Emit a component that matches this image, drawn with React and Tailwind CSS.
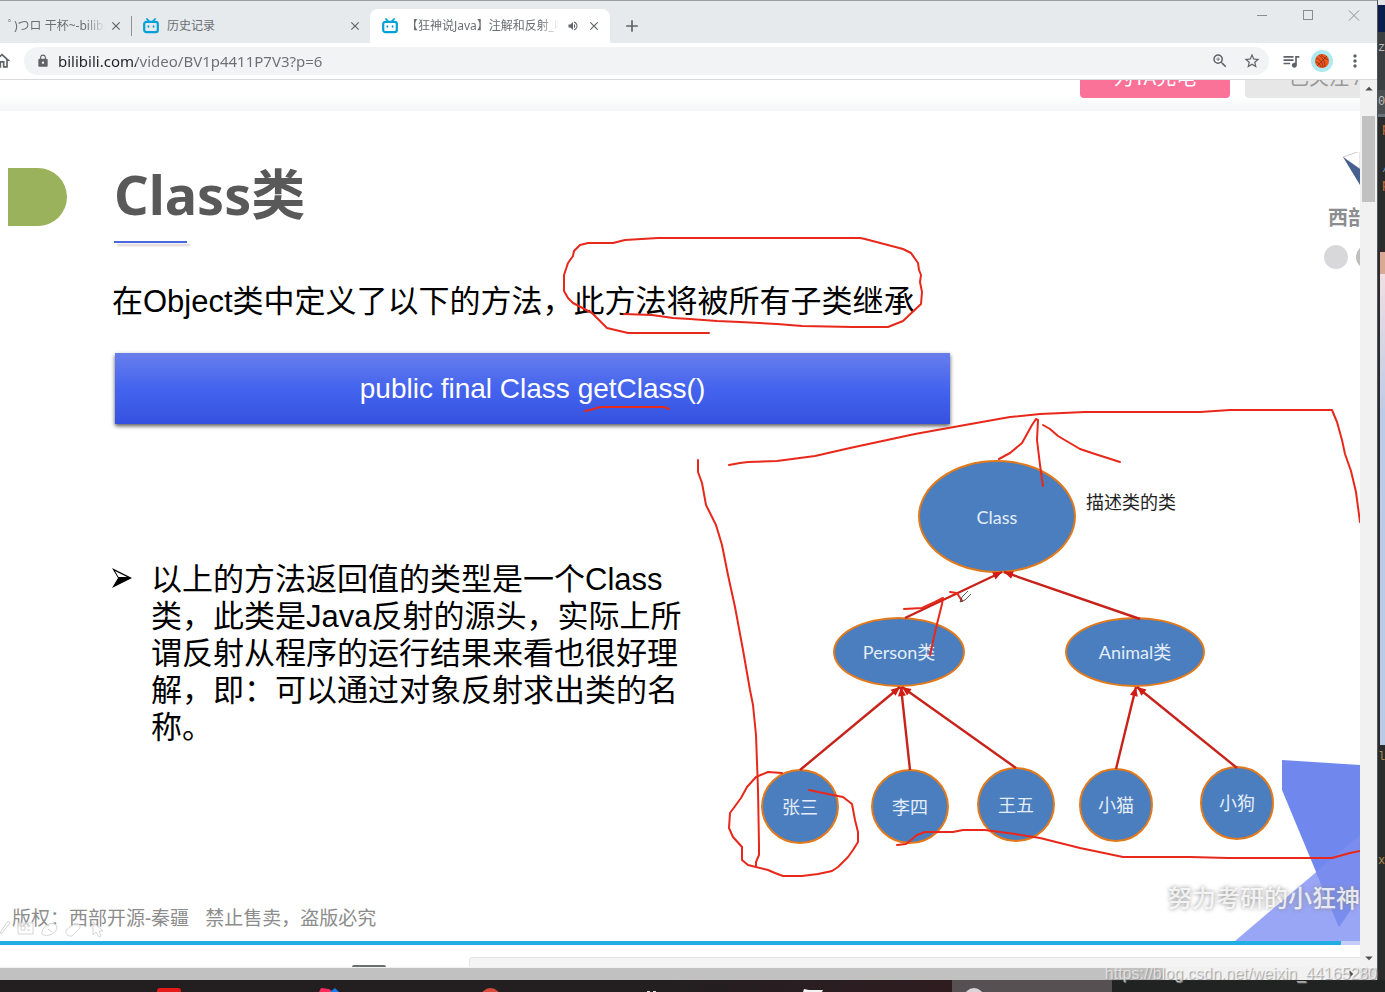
import {
  MdAdd,
  MdArrowDropDown,
  MdArrowDropUp,
  MdArrowRight,
  MdClose,
  MdLock,
  MdMoreVert,
  MdOutlineHome,
  MdQueueMusic,
  MdStarBorder,
  MdVolumeUp,
  MdZoomIn,
} from "react-icons/md";

const nodes = [
  { label: "Class", box: "left-[918px] top-[349px] w-[158px] h-[113px]" },
  { label: "Person类", box: "left-[833px] top-[506px] w-[132px] h-[70px]" },
  { label: "Animal类", box: "left-[1065px] top-[506px] w-[140px] h-[70px]" },
  { label: "张三", box: "left-[761px] top-[658px] w-[78px] h-[75px]" },
  { label: "李四", box: "left-[871px] top-[658px] w-[78px] h-[75px]" },
  { label: "王五", box: "left-[977px] top-[656px] w-[78px] h-[75px]" },
  { label: "小猫", box: "left-[1079px] top-[657px] w-[74px] h-[74px]" },
  { label: "小狗", box: "left-[1200px] top-[655px] w-[74px] h-[74px]" },
];

// child top -> parent bottom
const edges = [
  [905, 618, 1002, 572],
  [1140, 619, 1004, 572],
  [800, 770, 900, 687],
  [910, 770, 901, 687],
  [1016, 768, 902, 687],
  [1116, 769, 1136, 687],
  [1237, 768, 1137, 687],
];

const penStrokes = [
  // loop round the second half of the sentence
  "624,314 652,315 673,318 690,319 717,321 740,322 777,324 802,326 853,327 888,327 893,325 903,321 921,304 922,292 920,282 921,275 919,270 918,263 911,253 903,249 865,239 860,238 658,238 625,240 613,243 588,243 580,245 574,251 573,256 568,263 564,275 564,291 568,298 573,303 592,313 607,328 628,333 709,333",
  "585,411 590,410 600,407 664,407 669,409",
  // big frame
  "729,465 740,463 748,462 777,461 815,456 850,448 915,434 965,425 1010,417 1040,414 1085,412 1200,412 1230,410 1332,410 1337,422 1342,440 1345,454 1351,471 1356,492 1360,522",
  "698,460 698,472 702,483 706,505 716,525 722,545 728,575 735,607 743,650 750,690 753,705 756,735 758,790 759,845 759,855 756,862 756,866",
  "897,845 906,844 917,835 925,832 953,832 963,830 985,830 1015,834 1040,838 1080,848 1123,857 1190,857 1228,858 1332,858 1350,853 1360,851",
  "782,773 768,772 756,777 747,787 741,798 730,813 729,828 733,837 742,847 742,860 748,865 768,870 775,873 783,876 802,876 818,874 832,871 838,867 848,857 853,850 858,842 858,832 855,820 852,804 843,797 823,793 809,790",
  // arrows
  "999,459 1010,453 1022,443 1032,425 1036,419 1038,420 1037,440 1040,465 1043,486",
  "1043,425 1050,429 1058,436 1080,449 1095,454 1120,462",
  "904,609 922,608 935,602 943,598 942,604 936,628 930,655",
  "950,592 957,593 962,601",
];

function BiliIcon() {
  return (
    <svg viewBox="0 0 16 16" className="w-4 h-4 shrink-0" fill="none" stroke="#00a1d6" strokeLinecap="round">
      <rect x="1.2" y="3.8" width="13.6" height="10.4" rx="2.2" strokeWidth="2.2" />
      <path d="M4 1 L5.8 3 M12 1 L10.2 3" strokeWidth="1.8" />
      <path d="M5.4 8.2 V8.8 M10.6 8.2 V8.8" strokeWidth="1.8" />
    </svg>
  );
}

function CloseButton() {
  return (
    <button aria-label="关闭标签页" className="shrink-0 text-[#5f6368]">
      <MdClose className="w-3.5 h-3.5" />
    </button>
  );
}

function TabStrip() {
  return (
    <div className="flex items-end h-[42px] bg-[#e6eaed] text-xs text-[#6b6f73]">
      <div className="flex items-center h-[34px] w-[131px] pl-2 pr-2 gap-1">
        <span className="flex-1 min-w-0 overflow-hidden whitespace-nowrap [mask-image:linear-gradient(to_right,black_80%,transparent)]">
          ﾟ)つロ 干杯~-bilibili
        </span>
        <CloseButton />
      </div>
      <div className="w-px h-5 mb-[7px] bg-[#8e9296]"></div>
      <div className="flex items-center h-[34px] w-[238px] pl-[11px] pr-2 gap-2">
        <BiliIcon />
        <span className="flex-1 whitespace-nowrap">历史记录</span>
        <CloseButton />
      </div>
      <div className="flex items-center h-[34px] w-[240px] pl-3 pr-[9px] gap-2 bg-white rounded-t-lg">
        <BiliIcon />
        <span className="flex-1 min-w-0 overflow-hidden whitespace-nowrap [mask-image:linear-gradient(to_right,black_88%,transparent)]">
          【狂神说Java】注解和反射_哔哩
        </span>
        <MdVolumeUp className="w-3 h-3 shrink-0 text-[#5f6368]" />
        <CloseButton />
      </div>
      <button aria-label="新标签页" className="flex items-center h-[34px] ml-3 text-[#5f6368]">
        <MdAdd className="w-5 h-5" />
      </button>
      <div className="flex self-start ml-auto mt-[9px] mr-[17px] gap-[34px] text-[#8a8d90]">
        <button aria-label="最小化">
          <svg className="w-3 h-3" viewBox="0 0 12 12" stroke="currentColor"><path d="M1 5.5H11" /></svg>
        </button>
        <button aria-label="最大化">
          <svg className="w-3 h-3" viewBox="0 0 12 12" fill="none" stroke="currentColor"><rect x="1.5" y=".5" width="9" height="9" /></svg>
        </button>
        <button aria-label="关闭">
          <svg className="w-3 h-3" viewBox="0 0 12 12" stroke="currentColor"><path d="M1 .5L11 10.5M11 .5L1 10.5" /></svg>
        </button>
      </div>
    </div>
  );
}

function Toolbar() {
  return (
    <div className="flex items-center h-[37px] pr-3 bg-white border-b border-[#d9dadc] text-[#5f6368]">
      <button aria-label="主页" className="-ml-2 mr-3 shrink-0">
        <MdOutlineHome className="w-5 h-5" />
      </button>
      <div className="flex flex-1 items-center h-7 pl-3 pr-2 gap-2 rounded-full bg-[#f1f3f4]">
        <MdLock className="w-3.5 h-3.5" />
        <input
          aria-label="地址"
          defaultValue="bilibili.com/video/BV1p4411P7V3?p=6"
          className="flex-1 min-w-0 text-[15px] outline-none text-transparent bg-clip-text bg-[linear-gradient(to_right,#202124_78px,#6b6e72_78px)]"
        />
        <button aria-label="缩放"><MdZoomIn className="w-[18px] h-[18px]" /></button>
        <button aria-label="收藏" className="ml-1.5"><MdStarBorder className="w-[18px] h-[18px]" /></button>
      </div>
      <button aria-label="媒体控制" className="ml-3"><MdQueueMusic className="w-5 h-5" /></button>
      <button aria-label="用户" className="ml-2.5">
        <svg viewBox="0 0 22 22" className="w-[22px] h-[22px]" fill="none">
          <circle cx="11" cy="11" r="11" fill="#aee8f0" />
          <circle cx="11" cy="11" r="7" fill="#f2561d" />
          <path d="M6 16L16 6M8 5C12 8 14 12 14 17M5 8C9 9 12 13 12 17.500M10 4C11 6 14 9 17.500 10M4.500 12C7 12 9 14 10 17" stroke="#6b2c16" strokeWidth=".7" />
        </svg>
      </button>
      <button aria-label="菜单" className="ml-3"><MdMoreVert className="w-5 h-5" /></button>
    </div>
  );
}

function Edge({ x1, y1, x2, y2 }) {
  const angle = (Math.atan2(y2 - y1, x2 - x1) * 180) / Math.PI;
  return (
    <g stroke="#c8231b" fill="#d01c12">
      <line x1={x1} y1={y1} x2={x2} y2={y2} strokeWidth="2.4" />
      <path d="M0 0L-9 -4V4Z" stroke="none" transform={`translate(${x2} ${y2}) rotate(${angle})`} />
    </g>
  );
}

function Diagram() {
  return (
    <div className="absolute left-0 top-0 font-['Lato','Noto_Sans_CJK_SC',sans-serif] text-lg">
      {nodes.map((n) => (
        <div
          key={n.label}
          className={`absolute flex items-center justify-center rounded-[50%] border-2 border-[#e27a1c] bg-[#4a7ebf] text-[#e4edf8] whitespace-nowrap ${n.box}`}
        >
          {n.label}
        </div>
      ))}
      <p className="absolute left-[1086px] top-[377px] whitespace-nowrap text-[#222]">描述类的类</p>
    </div>
  );
}

function Ink() {
  return (
    <svg viewBox="0 111 1360 830" className="absolute left-0 top-0 w-[1360px] h-[830px] max-w-none pointer-events-none">
      {edges.map(([x1, y1, x2, y2]) => (
        <Edge key={`${x1}-${x2}`} x1={x1} y1={y1} x2={x2} y2={y2} />
      ))}
      {penStrokes.map((points) => (
        <polyline
          key={points}
          points={points}
          fill="none"
          stroke="#e8281a"
          strokeWidth="2"
          strokeLinecap="round"
          strokeLinejoin="round"
        />
      ))}
      {/* pen cursor */}
      <path d="M960 602L962 597L968 591M960 602L965 600L971 594" fill="none" stroke="#333" strokeWidth=".8" />
      {/* faint presenter tools */}
      <g fill="#fff" fillOpacity=".6" stroke="#d4d4d4">
        <path d="M-1 934L8 921L10 923L2 933Z" />
        <path d="M18 923H33V934H18ZM21 926H25V930H21ZM27 926H30M27 930H30" />
        <path d="M42 932C43 926 50 922 55 924C59 927 56 933 50 935C45 936 41 935 42 932ZM48 929L52 932" />
        <path d="M66 930L74 924C78 922 82 926 79 929L72 936C68 937 65 933 66 930Z" />
        <path d="M93 922V935L96 932L99 937L101 936L99 931H103Z" />
      </g>
    </svg>
  );
}

function Slide() {
  return (
    <section className="relative flex flex-col min-h-[830px] pt-[57px] pb-[11px] bg-white overflow-hidden">
      <svg viewBox="1234 760 126 181" className="absolute right-0 bottom-0 w-[126px] h-[181px]">
        <path d="M1235 941L1360 835V941Z" fill="#99a5f5" />
        <path d="M1282 760L1360 765V896L1339 927L1282 790Z" fill="#7088ee" />
        <path d="M1316 872L1360 835V896L1339 927Z" fill="#7a8def" />
      </svg>

      <div className="flex h-[75px] pl-2">
        <div className="w-[59px] h-[58px] mr-[47px] rounded-r-full bg-[#9bb25c]"></div>
        <div>
          <h1 className="text-[54px] leading-[52px] font-bold text-[#595959]">Class类</h1>
          <div className="w-[73px] h-[2px] mt-[21px] bg-[#4a68dd] shadow-[3px_3px_2px_#d8cfd0]"></div>
        </div>
      </div>

      <p className="pl-28 mt-[39px] text-[31px] leading-[40px] text-black font-['Liberation_Sans','Noto_Sans_CJK_SC',sans-serif]">
        在Object类中定义了以下的方法，此方法将被所有子类继承
      </p>

      <div className="flex items-center justify-center w-[835px] h-[71px] ml-[115px] mt-[31px] bg-linear-to-b from-[#687eec] via-[#4463ee] to-[#3452df] shadow-[0_2px_4px_#555] text-[28px] text-white font-['Liberation_Sans',sans-serif]">
        public final Class getClass()
      </div>

      <ul className="ml-28 mt-[137px] text-[31px] leading-[37px] text-black font-['Liberation_Sans','Noto_Sans_CJK_SC',sans-serif]">
        <li className="flex">
          <svg viewBox="0 0 20 22" className="w-5 h-[22px] mt-[6px] mr-[19px] shrink-0">
            <path d="M0 1L20 11L0 21L6 11Z" />
            <path d="M3 4L15 10H6.500Z" fill="#fff" />
          </svg>
          <p className="w-[535px]">
            以上的方法返回值的类型是一个Class类，此类是Java反射的源头，实际上所谓反射从程序的运行结果来看也很好理解，即：可以通过对象反射求出类的名称。
          </p>
        </li>
      </ul>

      <p className="flex gap-4 mt-auto pl-3 text-[19px] leading-6 text-[#8c8c8c]">
        <span>版权：西部开源-秦疆</span>
        <span>禁止售卖，盗版必究</span>
      </p>

      <Diagram />

      {/* company logo, cut by the window edge */}
      <div className="absolute right-0 top-[41px] w-8 overflow-hidden">
        <svg viewBox="1328 152 32 50" className="w-8 h-[50px]">
          <path d="M1343 157L1360 151V169Z" fill="#fff" stroke="#ccc" />
          <path d="M1343 157L1360 169V185Z" fill="#48608f" />
        </svg>
        <p className="text-xl leading-8 font-bold whitespace-nowrap text-[#8b8d90]">西部</p>
      </div>
      <div className="absolute -right-5 top-[134px] flex gap-2">
        <div className="w-6 h-6 rounded-full bg-[#d8d8da]"></div>
        <div className="w-6 h-6 rounded-full bg-[#bfbfbf]"></div>
      </div>

      <Ink />

      <p className="absolute right-0 bottom-[26px] text-[24px] leading-[34px] font-medium whitespace-nowrap text-white/80 [text-shadow:0_0_4px_#888]">
        努力考研的小狂神
      </p>
    </section>
  );
}

function PageContent() {
  return (
    <main className="flex-1 min-w-0 overflow-hidden bg-white">
      <div className="flex justify-end gap-[15px] h-[31px] overflow-hidden bg-linear-to-b from-white from-50% to-[#f4f6f8] text-xl whitespace-nowrap">
        <button className="w-[150px] h-10 -mt-[22px] rounded bg-[#fb7299] text-white">为TA充电</button>
        <button className="w-[115px] h-10 -mt-[22px] pl-11 rounded-l bg-[#e7e7e7] text-left text-[#999] overflow-hidden">
          已关注 /
        </button>
      </div>
      <Slide />
      <div className="flex h-1 bg-[#c5cdfb]" role="progressbar" aria-label="播放进度">
        <div className="flex-1 bg-[#23ade5]"></div>
        <div className="w-[19px]"></div>
      </div>
      <div className="flex items-end h-[22px]">
        <div className="w-[34px] h-[2px] ml-[352px] rounded-t-full bg-[#6d716d]"></div>
        <div className="flex-1 h-[10px] ml-[83px] border-t border-l border-[#e3e3e3] rounded-tl-sm bg-[#f4f4f4]"></div>
      </div>
    </main>
  );
}

function VerticalScrollbar() {
  return (
    <div className="flex flex-col items-center w-[17px] bg-[#f1f1f1] text-[#505050]">
      <MdArrowDropUp className="w-[18px] h-[18px]" />
      <div className="w-[13px] h-[86px] mt-[18px] bg-[#c1c1c1]"></div>
      <MdArrowDropDown className="w-[18px] h-[18px] mt-auto" />
    </div>
  );
}

// what shows of the editor and the photo behind the browser
function DesktopEdge() {
  return (
    <div className="flex flex-col w-2 border-l border-[#50565a] overflow-hidden bg-[#2b2b2b] font-['Liberation_Mono',monospace] text-xs whitespace-nowrap text-[#bbb]">
      <div className="h-[5px] bg-[#e4e4e6]"></div>
      <div className="h-[27px] bg-[#0b1d4d]"></div>
      <div className="h-[58px] pt-2 bg-[#3c3f41]">ze</div>
      <div className="h-6 pt-1 bg-[#4c5052]">02</div>
      <div className="h-[3px] bg-[#6b7278]"></div>
      <div className="h-[135px] pl-1 pt-1 text-[#cc7832]">
        <p>p</p>
        <p className="mt-6 text-[#6897bb]">/</p>
        <p>p</p>
      </div>
      <div className="h-[22px] ml-[2px] bg-[#dba893]"></div>
      <div className="h-[471px] ml-[2px] bg-linear-to-b from-[#f0dfe2] via-[#bccbe6] via-30% to-[#b9cbe4]"></div>
      <p className="mt-1 text-[#b09050]">lo</p>
      <p className="mt-[88px] text-[#b09050]">xi</p>
    </div>
  );
}

function Taskbar() {
  return (
    <footer className="flex h-3 overflow-hidden bg-[#212322]">
      <div className="w-[952px] bg-linear-to-r from-[#231f21] from-70% to-[#2f1c21]">
        <svg viewBox="0 0 952 12" className="w-[952px] h-3">
          <rect x="157" y="8" width="24" height="12" rx="3" fill="#e61a1a" />
          <path d="M319 12L321 8L329 9L333 12Z" fill="#fb2c5c" />
          <path d="M330 12L335 8L339 12Z" fill="#147df5" />
          <circle cx="490.500" cy="18" r="10" fill="#d84a3c" />
          <path d="M647 11.500H650M653 11.500H656" stroke="#ddd" />
          <path d="M803 12L804 9L809 10H823L822 12Z" fill="#f4f4f4" />
        </svg>
      </div>
      <div className="w-40 bg-[#575052]">
        <svg viewBox="0 0 160 12" className="w-40 h-3">
          <circle cx="22" cy="18" r="10" fill="#d6d4d8" />
        </svg>
      </div>
    </footer>
  );
}

export default function App() {
  return (
    <div className="relative flex flex-col min-h-screen overflow-hidden bg-[#212322] font-['Noto_Sans','Noto_Sans_CJK_SC',sans-serif]">
      <div className="flex flex-1">
        <div className="flex flex-col flex-1 min-w-0 border-t border-[#9a9da3]">
          <TabStrip />
          <Toolbar />
          <div className="flex flex-1">
            <PageContent />
            <VerticalScrollbar />
          </div>
          <div className="flex h-[13px] pt-px bg-[#f1f1f1]">
            <div className="flex-1 bg-[#c1c1c1]"></div>
            <div className="flex items-center justify-end w-[197px] text-[#505050]">
              <MdArrowRight className="w-[18px] h-[18px]" />
            </div>
            <div className="w-[17px] bg-[#dcdcdc]"></div>
          </div>
        </div>
        <DesktopEdge />
      </div>
      <Taskbar />
      <p className="absolute right-2 bottom-1.5 text-base leading-6 text-white/60 [text-shadow:1px_1px_1px_#999] font-['Liberation_Sans',sans-serif]">
        https://blog.csdn.net/weixin_44165280
      </p>
    </div>
  );
}
